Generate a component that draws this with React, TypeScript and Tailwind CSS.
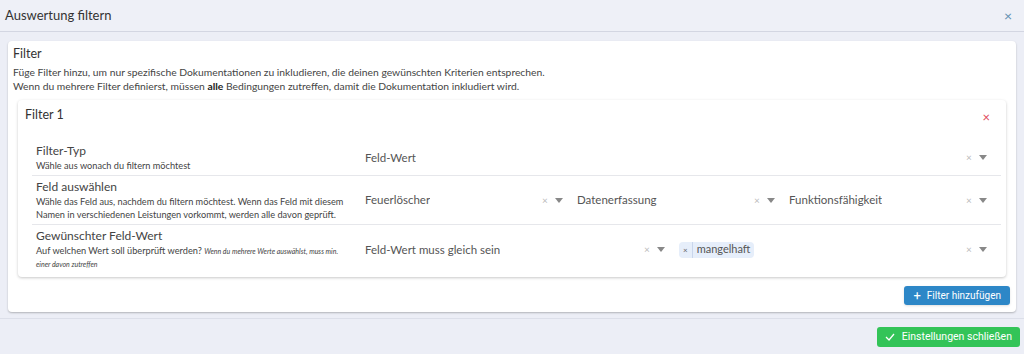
import React, { FC } from "react";

// select with clear + dropdown indicators
type SelectProps = {
  value?: string;
  tag?: string;
  className?: string;
};

const FakeSelect: FC<SelectProps> = ({ value, tag, className }) => {
  return (
    <div className={`flex items-center h-[30px] pl-2 pr-[6px] ${className ?? ""}`}>
      <div className="flex-1 min-w-0 flex items-center">
        {tag ? (
          <span className="flex items-center h-[16px] bg-[#e6eefa] text-[#555] text-[11px] rounded-sm">
            <span className="px-[4px] text-[8px] text-[#666] border-r border-[#c9d6ec] h-full flex items-center">
              ×
            </span>
            <span className="px-[4px]">{tag}</span>
          </span>
        ) : (
          <span className="text-[11.5px] text-[#555] truncate">{value}</span>
        )}
      </div>
      <span className="text-[10px] text-[#bbb] w-[14px] text-center">×</span>
      <svg width="8" height="5" viewBox="0 0 8 5" className="ml-[3px]">
        <path d="M0 0h8L4 5z" fill="#888" />
      </svg>
    </div>
  );
};

type RowProps = {
  title: string;
  children: React.ReactNode;
  desc: React.ReactNode;
  last?: boolean;
};

const FilterRow: FC<RowProps> = ({ title, desc, children, last }) => {
  return (
    <div
      className={`flex items-center ml-[14px] mr-[5px] ${
        last ? "" : "border-b border-[#e6e7eb]"
      }`}
    >
      <div className="w-[325px] shrink-0 pl-[4px] py-[3px]">
        <div className="text-[12px] text-[#444] leading-[15px]">{title}</div>
        <div className="text-[9.2px] text-[#444] leading-[13px] mt-[1px]">
          {desc}
        </div>
      </div>
      <div className="flex-1 flex items-center pr-[8px]">{children}</div>
    </div>
  );
};

const App: FC = () => {
  return (
    <div
      className="w-[1024px] h-[354px] bg-[#eceef6] flex flex-col overflow-hidden"
      style={{ fontFamily: "Lato, 'Noto Sans', sans-serif" }}
    >
      {/* HEADER */}
      <div className="h-[32px] shrink-0 flex items-center justify-between pl-[5px] pr-[12px] border-b border-[#d3d6e2] bg-[#eef0f7]">
        <span className="text-[13px] text-[#333]">Auswertung filtern</span>
        <span className="text-[14px] text-[#5e8fb0] leading-none">×</span>
      </div>

      {/* BODY */}
      <div className="h-[287px] shrink-0 pt-[9px] px-[8px] border-b border-[#dcdfe9]">
        <div className="bg-white rounded-sm shadow-[0_1px_2px_rgba(0,0,0,0.25)] pb-[7px]">
          <div className="px-[5px] pt-[4px]">
            <div className="text-[12.5px] text-[#333] leading-[17px]">Filter</div>
            <div className="text-[10.3px] text-[#444] leading-[14px] mt-[3px]">
              Füge Filter hinzu, um nur spezifische Dokumentationen zu
              inkludieren, die deinen gewünschten Kriterien entsprechen.
            </div>
            <div className="text-[10.3px] text-[#444] leading-[14px]">
              Wenn du mehrere Filter definierst, müssen{" "}
              <span className="font-bold text-[#222]">alle</span> Bedingungen
              zutreffen, damit die Dokumentation inkludiert wird.
            </div>
          </div>

          {/* filter card */}
          <div className="mx-[10px] mt-[7px] bg-white rounded-sm shadow-[0_1px_3px_rgba(0,0,0,0.22)] pb-[3px]">
            <div className="flex justify-between items-start pl-[7px] pr-[16px] pt-[6px] h-[40px]">
              <span className="text-[12.5px] text-[#333]">Filter 1</span>
              <span className="text-[13px] text-[#e0475a] mt-[5px] leading-none">
                ×
              </span>
            </div>

            <FilterRow
              title="Filter-Typ"
              desc="Wähle aus wonach du filtern möchtest"
            >
              <FakeSelect value="Feld-Wert" className="flex-1" />
            </FilterRow>

            <FilterRow
              title="Feld auswählen"
              desc={
                <>
                  Wähle das Feld aus, nachdem du filtern möchtest. Wenn das Feld
                  mit diesem Namen in verschiedenen Leistungen vorkommt, werden
                  alle davon geprüft.
                </>
              }
            >
              <FakeSelect value="Feuerlöscher" className="flex-1" />
              <FakeSelect value="Datenerfassung" className="flex-1" />
              <FakeSelect value="Funktionsfähigkeit" className="flex-1" />
            </FilterRow>

            <FilterRow
              last
              title="Gewünschter Feld-Wert"
              desc={
                <>
                  <div className="whitespace-nowrap">
                    Auf welchen Wert soll überprüft werden?{" "}
                    <span className="italic text-[7px]">
                      Wenn du mehrere Werte auswählst, muss min.
                    </span>
                  </div>
                  <div className="italic text-[7px]">einer davon zutreffen</div>
                </>
              }
            >
              <FakeSelect
                value="Feld-Wert muss gleich sein"
                className="w-[314px] shrink-0"
              />
              <FakeSelect tag="mangelhaft" className="flex-1" />
            </FilterRow>
          </div>

          <div className="flex justify-end pr-[6px] mt-[9px]">
            <button
              className="h-[19px] px-[9px] bg-[#2d87c7] rounded-[3px] text-white text-[10px] flex items-center gap-[6px] shadow-sm"
              style={{ fontFamily: "Roboto, sans-serif" }}
            >
              <span className="text-[13px] leading-none">+</span>
              Filter hinzufügen
            </button>
          </div>
        </div>
      </div>

      {/* FOOTER */}
      <div className="flex-1 flex items-center justify-end pr-[4px]">
        <button
          className="h-[20px] px-[8px] bg-[#33c458] rounded-[3px] text-white text-[10.5px] flex items-center gap-[7px]"
          style={{ fontFamily: "Roboto, sans-serif" }}
        >
          <svg width="10" height="8" viewBox="0 0 10 8">
            <path d="M1 4l3 3 5-6" stroke="#fff" strokeWidth="1.3" fill="none" />
          </svg>
          Einstellungen schließen
        </button>
      </div>
    </div>
  );
};

export default App;
